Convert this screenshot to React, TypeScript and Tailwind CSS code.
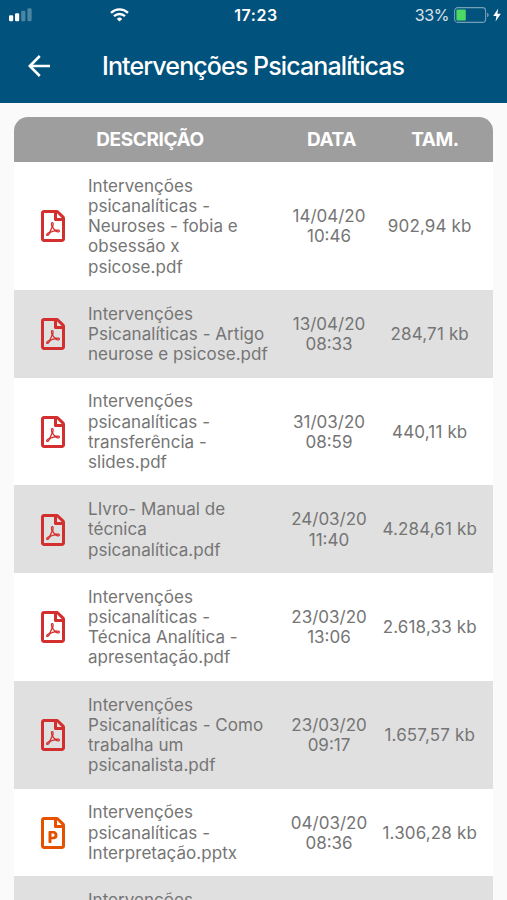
import { FaRegFilePdf, FaRegFilePowerpoint } from "react-icons/fa";

type FileRow = {
  lines: string[];
  date?: string;
  time?: string;
  size?: string;
  type?: "pptx";
};

const files: FileRow[] = [
  {
    lines: ["Intervenções", "psicanalíticas -", "Neuroses - fobia e", "obsessão x", "psicose.pdf"],
    date: "14/04/20",
    time: "10:46",
    size: "902,94 kb",
  },
  {
    lines: ["Intervenções", "Psicanalíticas - Artigo", "neurose e psicose.pdf"],
    date: "13/04/20",
    time: "08:33",
    size: "284,71 kb",
  },
  {
    lines: ["Intervenções", "psicanalíticas -", "transferência -", "slides.pdf"],
    date: "31/03/20",
    time: "08:59",
    size: "440,11 kb",
  },
  {
    lines: ["LIvro- Manual de", "técnica", "psicanalítica.pdf"],
    date: "24/03/20",
    time: "11:40",
    size: "4.284,61 kb",
  },
  {
    lines: ["Intervenções", "psicanalíticas -", "Técnica Analítica -", "apresentação.pdf"],
    date: "23/03/20",
    time: "13:06",
    size: "2.618,33 kb",
  },
  {
    lines: ["Intervenções", "Psicanalíticas - Como", "trabalha um", "psicanalista.pdf"],
    date: "23/03/20",
    time: "09:17",
    size: "1.657,57 kb",
  },
  {
    lines: ["Intervenções", "psicanalíticas -", "Interpretação.pptx"],
    date: "04/03/20",
    time: "08:36",
    size: "1.306,28 kb",
    type: "pptx",
  },
  { lines: ["Intervenções"] },
];

function StatusBar() {
  return (
    <div className="grid h-[30px] grid-cols-[1fr_auto_1fr] items-center text-white">
      <div className="flex items-center pl-[9px]">
        <svg width="23" height="14" viewBox="0 0 23 14" fill="currentColor">
          <rect x="0" y="7.2" width="4.2" height="6" rx="1.2" />
          <rect x="6" y="5.2" width="4.2" height="8" rx="1.2" />
          <rect x="12.2" y="2.7" width="4.2" height="10.5" rx="1.2" opacity="0.3" />
          <rect x="18.4" y="0.2" width="4.2" height="13" rx="1.2" opacity="0.3" />
        </svg>
        <svg className="ml-[78px]" width="19" height="14" viewBox="0 0 19 14" fill="none" stroke="currentColor" strokeWidth="2.4">
          <path d="M1 4.8a12.2 12.2 0 0 1 17 0" />
          <path d="M4 8.2a7.9 7.9 0 0 1 11 0" />
          <path d="M6.8 10.9a3.9 3.9 0 0 1 5.4 0L9.5 13.6z" fill="currentColor" stroke="none" />
        </svg>
      </div>
      <span className="pl-[5px] text-[16px] font-semibold tracking-[0.6px]">17:23</span>
      <div className="flex items-center justify-end pr-[6px]">
        <span className="text-[16px] tracking-[-0.4px] text-white/85">33%</span>
        <svg className="ml-[5px]" width="36" height="16" viewBox="0 0 36 16" fill="none">
          <rect x="0.6" y="0.6" width="31" height="14.8" rx="3.2" stroke="white" strokeOpacity="0.45" strokeWidth="1.1" />
          <rect x="2.4" y="2.6" width="9.4" height="10.8" rx="1" fill="#4cd964" />
          <path d="M33.2 5.6q3 2.4 0 4.8z" fill="white" fillOpacity="0.5" />
        </svg>
        <svg className="ml-[3px]" width="8" height="14" viewBox="0 0 8 14" fill="currentColor">
          <path d="M5.2 0.5L0.2 8h3.2L2.6 13.5 7.8 5.8H4.4z" />
        </svg>
      </div>
    </div>
  );
}

function FileIcon({ type }: { type?: "pptx" }) {
  if (type === "pptx") {
    return <FaRegFilePowerpoint size={32} className="w-6 text-[#e65100]" />;
  }
  return <FaRegFilePdf size={32} className="w-6 text-[#d32f2f]" />;
}

export default function App() {
  return (
    <div className="h-[900px] w-[507px] overflow-hidden bg-[#fafafa] font-['Inter','Liberation_Sans',sans-serif]">
      <header className="h-[103px] bg-[#01527c]">
        <StatusBar />
        <div className="flex h-[73px] items-center text-white">
          <svg className="mb-[2px] ml-[28px] shrink-0" width="22" height="22" viewBox="0 0 22 22" fill="none" stroke="currentColor" strokeWidth="2.6">
            <path d="M22 11H2M11.8 1L1.8 11l10 10" />
          </svg>
          <h1 className="ml-[52px] whitespace-nowrap text-[25px] font-medium tracking-[-0.9px]">
            Intervenções Psicanalíticas
          </h1>
        </div>
      </header>

      <main className="mx-[14px] mt-[14px]">
        <div className="grid h-[45px] grid-cols-[74px_198px_91px_1fr] items-center rounded-t-[14px] bg-[#9e9e9e] pt-px text-center text-[19px] font-bold tracking-[-0.4px] text-white">
          <span />
          <span className="pr-[74px]">DESCRIÇÃO</span>
          <span>DATA</span>
          <span>TAM.</span>
        </div>
        <div>
          {files.map((file, i) => (
            <div
              key={i}
              className="grid min-h-[87.7px] grid-cols-[74px_198px_86px_1fr] items-center bg-white pt-[13.7px] pb-[13.3px] text-[17px] leading-[20.2px] text-[#757575] even:bg-[#e0e0e0]"
            >
              <div className="pl-[27px]">
                <FileIcon type={file.type} />
              </div>
              <div className="self-start whitespace-nowrap tracking-[0.04px]">
                {file.lines.map((line) => (
                  <div key={line}>{line}</div>
                ))}
              </div>
              <div className="text-center">
                <div>{file.date}</div>
                <div>{file.time}</div>
              </div>
              <div className="whitespace-nowrap pr-[5.5px] text-center tracking-[0.15px]">{file.size}</div>
            </div>
          ))}
        </div>
      </main>
    </div>
  );
}
